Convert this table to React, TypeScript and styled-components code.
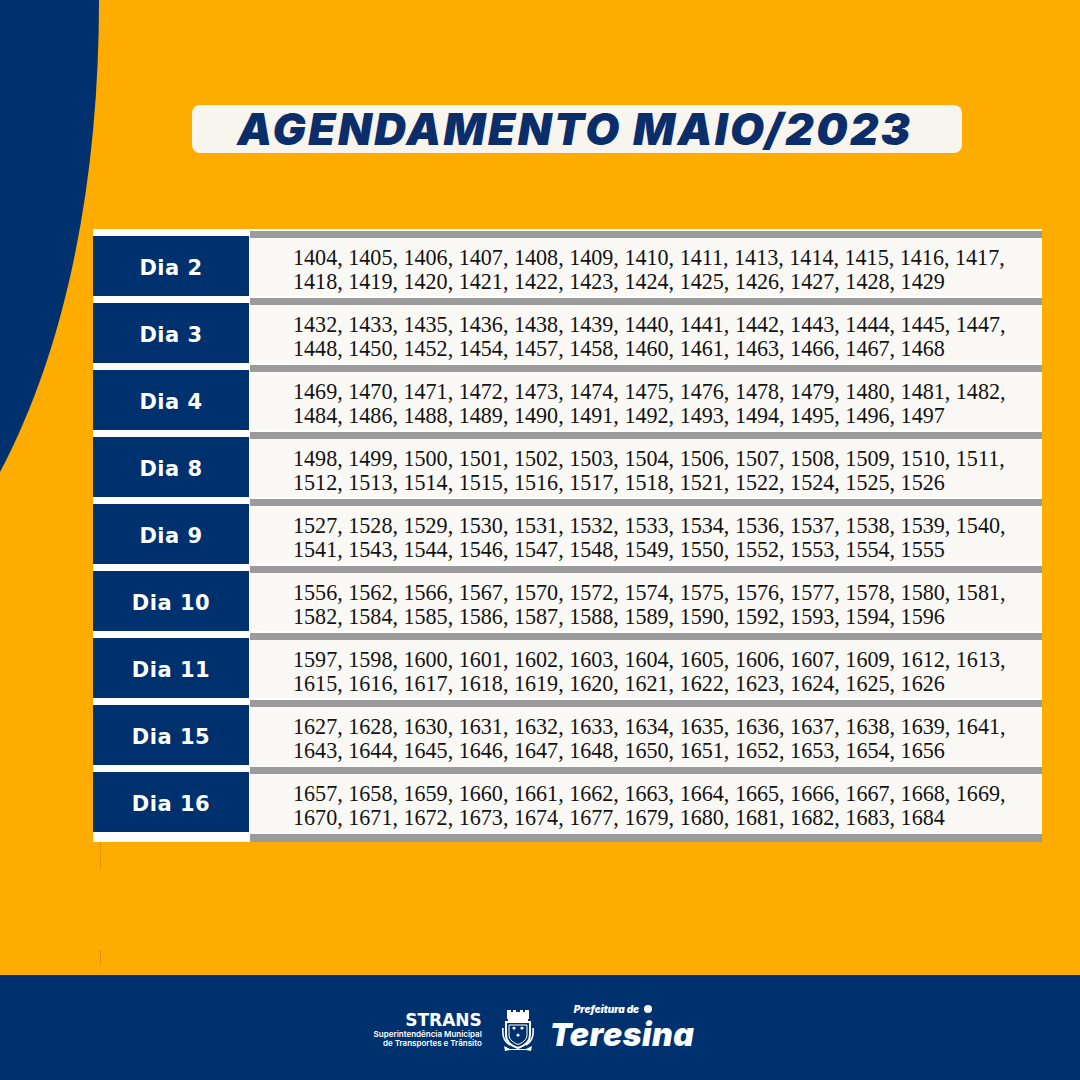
import React from "react";
import styled, { createGlobalStyle } from "styled-components";

const NAVY = "#00316f";
const ORANGE = "#feac00";

const Global = createGlobalStyle`
  html, body { margin: 0; padding: 0; background: ${ORANGE}; }
  * { box-sizing: border-box; }
`;

const Page = styled.div`
  position: relative;
  width: 1080px;
  height: 1080px;
  overflow: hidden;
  background: ${ORANGE};
  display: flex;
  flex-direction: column;
`;

const Curve = styled.svg`
  position: absolute;
  left: 0;
  top: 0;
  z-index: 0;
`;

const Trace = styled.div<{ $top: number; $h: number }>`
  position: absolute;
  left: 100px;
  top: ${(p) => p.$top}px;
  width: 1px;
  height: ${(p) => p.$h}px;
  background: #d99300;
  z-index: 0;
`;

const Main = styled.main`
  position: relative;
  z-index: 1;
  flex: 1;
  display: flex;
  flex-direction: column;
  padding-top: 105px;
`;

const TitleBox = styled.div`
  margin-left: 192px;
  width: 770px;
  height: 48px;
  border-radius: 8px;
  background: #f8f4ee;
  display: flex;
  align-items: center;
  justify-content: center;
`;

const Title = styled.h1`
  margin: 0;
  font-family: Inter, "DejaVu Sans", sans-serif;
  font-style: italic;
  font-weight: 900;
  font-size: 44px;
  letter-spacing: 2.4px;
  color: #0b2e6b;
  line-height: 1;
  padding-right: 4px;
`;

const Table = styled.section`
  margin-top: 76px;
  margin-left: 93px;
  width: 949px;
  background: #ffffff;
  display: grid;
  grid-template-columns: 156px 1fr;
  column-gap: 1px;
`;

const Label = styled.div`
  margin-top: 7px;
  height: 60px;
  padding-top: 4px;
  background: ${NAVY};
  color: #ffffff;
  display: flex;
  align-items: center;
  justify-content: center;
  font-family: "DejaVu Sans", Verdana, sans-serif;
  font-weight: 700;
  font-size: 21px;
  letter-spacing: 0.5px;
`;

const Cell = styled.div`
  margin-top: 2px;
  height: 65px;
  border-top: 7px solid #9b9b9b;
  background: #faf9f6;
  padding: 8px 0 0 43px;
  font-family: "Liberation Serif", "Times New Roman", serif;
  font-size: 22.1px;
  line-height: 24px;
  color: #121212;
`;

const Line = styled.div`
  white-space: nowrap;
`;

const EndLeft = styled.div`
  height: 8px;
`;

const EndRight = styled.div`
  height: 10px;
  border-top: 2px solid #faf9f6;
  background: #9b9b9b;
`;

const Footer = styled.footer`
  position: relative;
  z-index: 1;
  height: 105px;
  background: ${NAVY};
  display: flex;
  align-items: center;
  justify-content: center;
  gap: 14px;
  padding-right: 12px;
  padding-top: 4px;
`;

const Strans = styled.div`
  display: flex;
  flex-direction: column;
  align-items: flex-end;
  color: #ffffff;
  font-family: Inter, "DejaVu Sans", sans-serif;
  margin-right: 4px;
`;

const StransName = styled.div`
  font-family: "DejaVu Sans", sans-serif;
  font-weight: 700;
  font-size: 17px;
  line-height: 16px;
  margin-bottom: 2px;
`;

const StransSub = styled.div`
  font-size: 8px;
  font-weight: 600;
  line-height: 9px;
  white-space: nowrap;
`;

const Prefeitura = styled.div`
  display: flex;
  flex-direction: column;
  color: #ffffff;
  font-family: Inter, "DejaVu Sans", sans-serif;
  font-style: italic;
  font-weight: 900;
  margin-top: -4px;
`;

const PrefTop = styled.div`
  display: flex;
  align-items: center;
  gap: 5px;
  font-size: 10px;
  line-height: 12px;
  height: 12px;
  padding-left: 24px;
`;

const Dot = styled.span`
  display: block;
  flex: 0 0 8px;
  width: 8px;
  height: 8px;
  border-radius: 50%;
  background: #ffffff;
`;

const Teresina = styled.div`
  font-size: 32px;
  line-height: 34px;
  letter-spacing: 0.5px;
  margin-top: 3px;
`;

const rows: [string, string, string][] = [
  ["Dia 2", "1404, 1405, 1406, 1407, 1408, 1409, 1410, 1411, 1413, 1414, 1415, 1416, 1417,", "1418, 1419, 1420, 1421, 1422, 1423, 1424, 1425, 1426, 1427, 1428, 1429"],
  ["Dia 3", "1432, 1433, 1435, 1436, 1438, 1439, 1440, 1441, 1442, 1443, 1444, 1445, 1447,", "1448, 1450, 1452, 1454, 1457, 1458, 1460, 1461, 1463, 1466, 1467, 1468"],
  ["Dia 4", "1469, 1470, 1471, 1472, 1473, 1474, 1475, 1476, 1478, 1479, 1480, 1481, 1482,", "1484, 1486, 1488, 1489, 1490, 1491, 1492, 1493, 1494, 1495, 1496, 1497"],
  ["Dia 8", "1498, 1499, 1500, 1501, 1502, 1503, 1504, 1506, 1507, 1508, 1509, 1510, 1511,", "1512, 1513, 1514, 1515, 1516, 1517, 1518, 1521, 1522, 1524, 1525, 1526"],
  ["Dia 9", "1527, 1528, 1529, 1530, 1531, 1532, 1533, 1534, 1536, 1537, 1538, 1539, 1540,", "1541, 1543, 1544, 1546, 1547, 1548, 1549, 1550, 1552, 1553, 1554, 1555"],
  ["Dia 10", "1556, 1562, 1566, 1567, 1570, 1572, 1574, 1575, 1576, 1577, 1578, 1580, 1581,", "1582, 1584, 1585, 1586, 1587, 1588, 1589, 1590, 1592, 1593, 1594, 1596"],
  ["Dia 11", "1597, 1598, 1600, 1601, 1602, 1603, 1604, 1605, 1606, 1607, 1609, 1612, 1613,", "1615, 1616, 1617, 1618, 1619, 1620, 1621, 1622, 1623, 1624, 1625, 1626"],
  ["Dia 15", "1627, 1628, 1630, 1631, 1632, 1633, 1634, 1635, 1636, 1637, 1638, 1639, 1641,", "1643, 1644, 1645, 1646, 1647, 1648, 1650, 1651, 1652, 1653, 1654, 1656"],
  ["Dia 16", "1657, 1658, 1659, 1660, 1661, 1662, 1663, 1664, 1665, 1666, 1667, 1668, 1669,", "1670, 1671, 1672, 1673, 1674, 1677, 1679, 1680, 1681, 1682, 1683, 1684"],
];

const Crest = () => (
  <svg width="36" height="44" viewBox="0 0 36 44" fill="none">
    <path d="M7 2 h4 v2 h2 v-2 h3 v2 h4 v-2 h3 v2 h2 v-2 h4 v9 H7 Z" fill="#fff" />
    <rect x="8" y="11" width="20" height="2" fill="#fff" />
    <path d="M6 14 H30 V27 C30 34 24 38 18 40 C12 38 6 34 6 27 Z" stroke="#fff" strokeWidth="2" />
    <path d="M9 17 H27 V27 C27 32 22 35 18 36.5 C14 35 9 32 9 27 Z" stroke="#fff" strokeWidth="1" />
    <path d="M12 20 l2 -1.5 l2 1.5 l-2 2 Z M20 20 l2 -1.5 l2 1.5 l-2 2 Z M16 27 l2 -1.5 l2 1.5 l-2 2 Z" fill="#fff" />
    <path d="M3 20 C2 28 5 34 10 37 M33 20 C34 28 31 34 26 37" stroke="#fff" strokeWidth="1.6" />
    <path d="M4 38 L10 41 H26 L32 38 L31 43 L26 42 H10 L5 43 Z" fill="#fff" />
  </svg>
);

export default function App() {
  return (
    <Page>
      <Global />
      <Curve width="110" height="480" viewBox="0 0 110 480">
        <path d="M0 0 H99 C99 170 70 340 0 472 Z" fill={NAVY} />
      </Curve>
      <Trace $top={842} $h={26} />
      <Trace $top={950} $h={14} />
      <Main>
        <TitleBox>
          <Title>AGENDAMENTO MAIO/2023</Title>
        </TitleBox>
        <Table>
          {rows.map(([day, l1, l2]) => (
            <React.Fragment key={day}>
              <Label>{day}</Label>
              <Cell>
                <Line>{l1}</Line>
                <Line>{l2}</Line>
              </Cell>
            </React.Fragment>
          ))}
          <EndLeft />
          <EndRight />
        </Table>
      </Main>
      <Footer>
        <Strans>
          <StransName>STRANS</StransName>
          <StransSub>Superintendência Municipal</StransSub>
          <StransSub>de Transportes e Trânsito</StransSub>
        </Strans>
        <Crest />
        <Prefeitura>
          <PrefTop>
            Prefeitura de <Dot />
          </PrefTop>
          <Teresina>Teresina</Teresina>
        </Prefeitura>
      </Footer>
    </Page>
  );
}
